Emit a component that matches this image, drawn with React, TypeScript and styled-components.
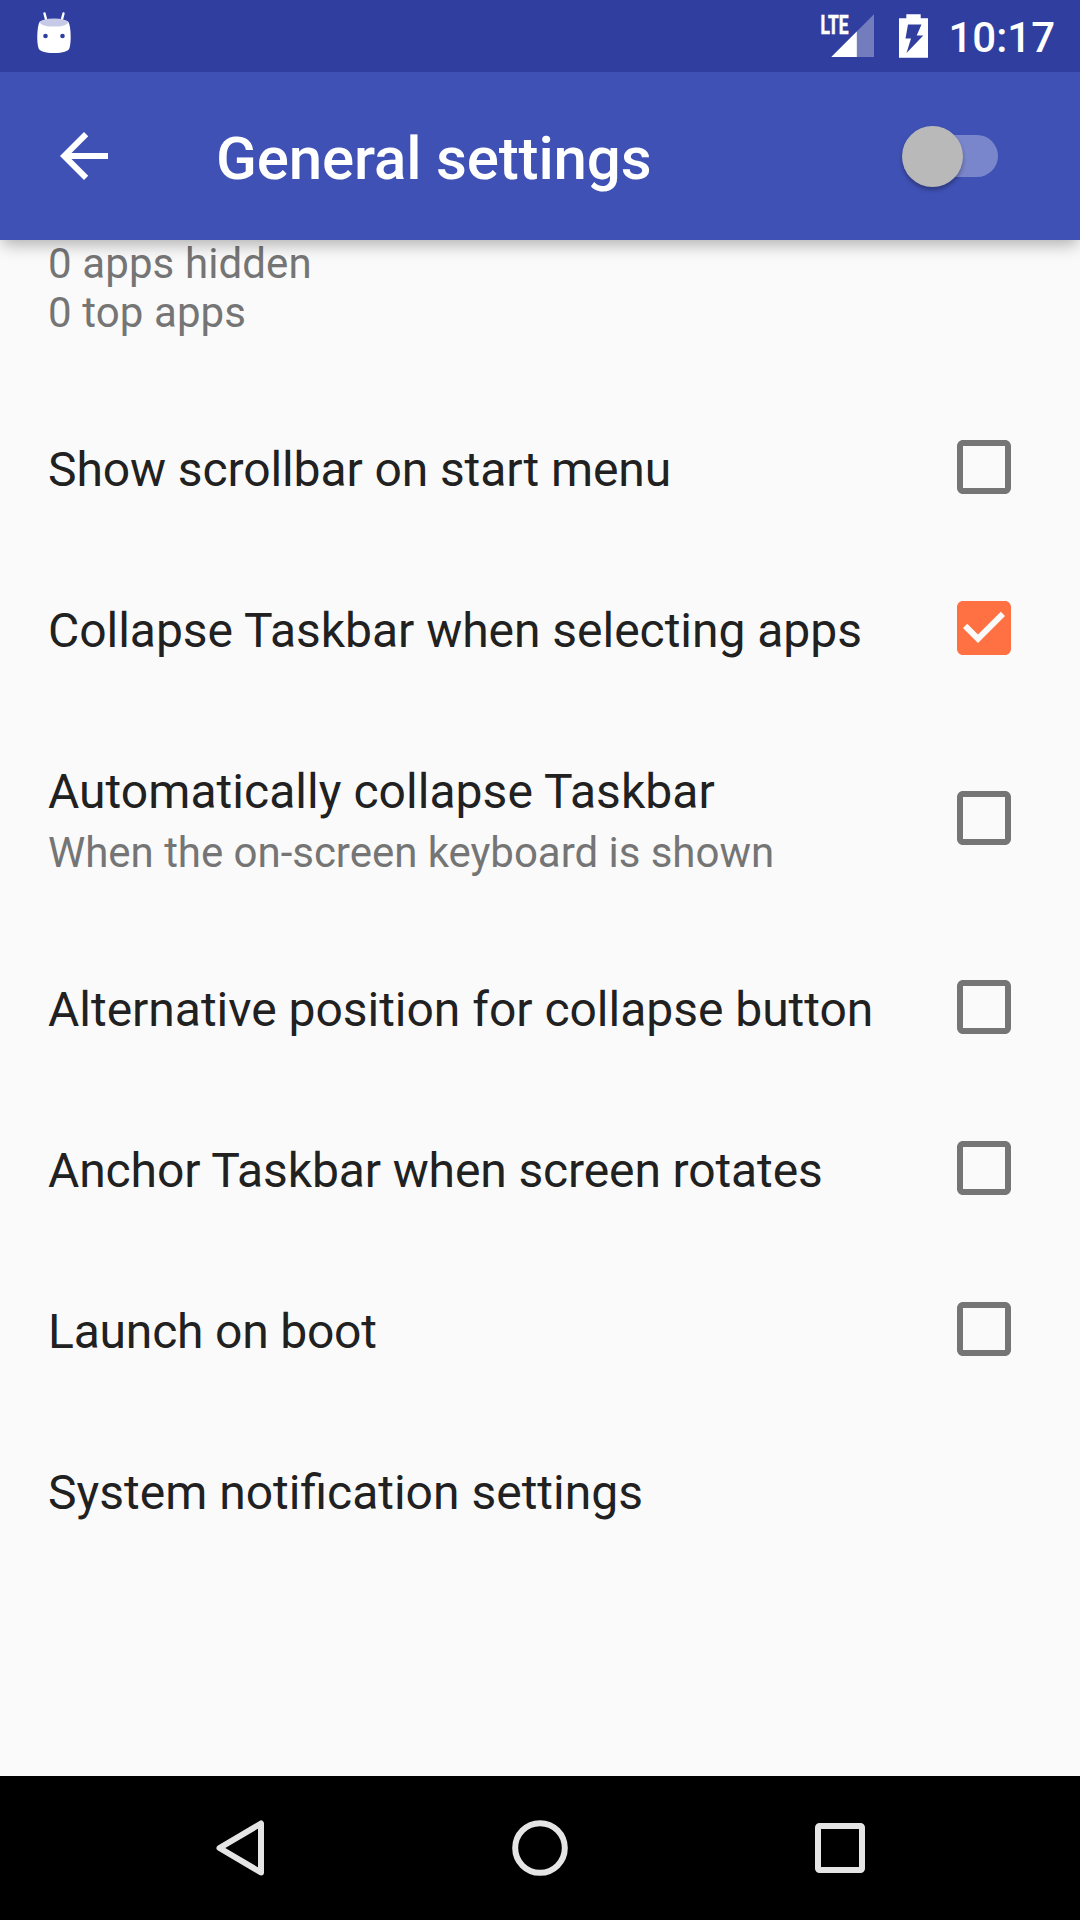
import React from 'react';
import styled, { createGlobalStyle } from 'styled-components';

const Global = createGlobalStyle`
  * { box-sizing: border-box; }
  body { margin: 0; }
  svg { display: block; flex: none; }
`;

const Screen = styled.div`
  display: flex;
  flex-direction: column;
  width: 1080px;
  height: 1920px;
  overflow: hidden;
  background: #fafafa;
  font-family: Roboto, sans-serif;
`;

const StatusBar = styled.header`
  display: flex;
  flex: none;
  justify-content: space-between;
  height: 72px;
  padding: 0 25px 0 36px;
  background: #303f9f;
  color: #fff;
  z-index: 2;
`;

const StatusIcons = styled.div`
  display: flex;
`;

const NetworkLabel = styled.text`
  font-size: 26px;
  font-weight: 700;
  fill: #fff;
  stroke: #fff;
  stroke-width: 0.6px;
`;

const Clock = styled.span`
  padding-top: 13px;
  margin-left: 17px;
  font-size: 42px;
  font-weight: 500;
  line-height: 49px;
`;

const Toolbar = styled.div`
  display: flex;
  flex: none;
  align-items: center;
  height: 168px;
  padding: 0 82px 0 48px;
  background: #3f51b5;
  color: #fff;
  z-index: 1;
  box-shadow: 0 6px 16px -2px rgba(0, 0, 0, 0.32);
`;

const Title = styled.h1`
  flex: 1;
  margin: 5px 0 0 96px;
  font-size: 60px;
  font-weight: 500;
  line-height: 72px;
  letter-spacing: -0.15px;
`;

const Switch = styled.div`
  display: flex;
  align-items: center;
  width: 96px;
  height: 60px;
  position: relative;
`;

const Track = styled.div`
  flex: 1;
  height: 42px;
  margin-left: 9px;
  border-radius: 21px;
  background: #7a86cb;
`;

const Thumb = styled.div`
  position: absolute;
  left: 0;
  top: -0.5px;
  width: 61px;
  height: 61px;
  border-radius: 50%;
  background: #b9b9b9;
  box-shadow: 0 3px 4px rgba(0, 0, 0, 0.3);
`;

const List = styled.main`
  display: flex;
  flex: 1;
  flex-direction: column;
  overflow: hidden;
`;

const TopSummary = styled.div`
  flex: none;
  height: 148px;
  margin-top: -1px;
  padding: 0 48px;
  font-size: 42px;
  line-height: 49px;
  letter-spacing: 0.11px;
  color: #757575;
`;

const Row = styled.div<{ $tall?: boolean }>`
  display: flex;
  flex: none;
  align-items: center;
  height: ${p => (p.$tall ? 218 : 161)}px;
  padding: 0 69px 0 48px;
`;

const Labels = styled.div`
  flex: 1;
  padding-top: 4px;
  white-space: nowrap;
`;

const Name = styled.div<{ $tracking?: number }>`
  font-size: 48px;
  line-height: 57px;
  letter-spacing: ${p => (p.$tracking ? `${p.$tracking}px` : 'normal')};
  color: #212121;
`;

const Note = styled.div`
  margin-top: 8px;
  font-size: 42px;
  line-height: 49px;
  letter-spacing: -0.03px;
  color: #757575;
`;

const CheckIcon = styled.svg<{ $on: boolean }>`
  width: 54px;
  height: 54px;
  margin-bottom: 1px;
  fill: ${p => (p.$on ? '#ff7043' : '#757575')};
`;

const NavBar = styled.nav`
  display: flex;
  flex: none;
  height: 144px;
  padding: 0 90px;
  background: #000;
`;

const NavButton = styled.div`
  display: flex;
  flex: 1;
  align-items: center;
  justify-content: center;
`;

const NavIcon = styled.svg`
  width: 60px;
  height: 60px;
  fill: none;
  stroke: #e5e5e5;
  stroke-width: 6px;
  stroke-linejoin: round;
`;

type Setting = { name: string; tracking?: number; note?: string; checked?: boolean };

const settings: Setting[] = [
  { name: 'Show scrollbar on start menu', tracking: -0.1, checked: false },
  { name: 'Collapse Taskbar when selecting apps', tracking: -0.03, checked: true },
  { name: 'Automatically collapse Taskbar', tracking: 0.04, note: 'When the on-screen keyboard is shown', checked: false },
  { name: 'Alternative position for collapse button', tracking: -0.02, checked: false },
  { name: 'Anchor Taskbar when screen rotates', tracking: -0.12, checked: false },
  { name: 'Launch on boot', tracking: -0.2, checked: false },
  { name: 'System notification settings' },
];

function Checkbox({ checked }: { checked: boolean }) {
  return (
    <CheckIcon $on={checked} viewBox="3 3 18 18">
      <path
        d={
          checked
            ? 'M19 3H5c-1.11 0-2 .9-2 2v14c0 1.1.89 2 2 2h14c1.11 0 2-.9 2-2V5c0-1.1-.89-2-2-2zm-9 14l-5-5 1.41-1.41L10 14.17l7.59-7.59L19 8l-9 9z'
            : 'M19 5v14H5V5h14m0-2H5c-1.1 0-2 .9-2 2v14c0 1.1.9 2 2 2h14c1.1 0 2-.9 2-2V5c0-1.1-.9-2-2-2z'
        }
      />
    </CheckIcon>
  );
}

function Marshmallow() {
  return (
    <svg width="36" height="72" viewBox="36 0 36 72">
      <path d="M44.5 13.5l2 7.5M63.5 13.5l-2 7.5" stroke="#fff" strokeWidth="2.4" strokeLinecap="round" />
      <path d="M39.5 22C44 18 64 18 68.5 22C71 27 71.5 42 69.5 48C68.5 51.5 63 53 54 53S39.500 51.5 38.5 48C36.5 42 37 27 39.5 22Z" fill="#fff" />
      <ellipse cx="54" cy="22.6" rx="14" ry="4" fill="#c7cae6" />
      <circle cx="45.5" cy="36" r="2.3" fill="#303f9f" />
      <circle cx="62.5" cy="36" r="2.3" fill="#303f9f" />
    </svg>
  );
}

function Signal() {
  return (
    <svg width="56" height="72" viewBox="820 0 56 72">
      <path d="M874 14.3V57H831.300Z" fill="#737dbd" />
      <path d="M856.8 31.5V57H831.300Z" fill="#fff" />
      <NetworkLabel x="820.5" y="33.6" textLength="28" lengthAdjust="spacingAndGlyphs">LTE</NetworkLabel>
    </svg>
  );
}

function Battery() {
  return (
    <svg width="55" height="72" viewBox="876 0 55 72">
      <path
        fillRule="evenodd"
        fill="#fff"
        d="M906.3 14.2H920.7V18.2H928V57.7H899V18.2H906.3ZM908 24.5L905.5 38.5H911L906.5 53L923.3 35.5H916.7L921.5 24.5Z"
      />
    </svg>
  );
}

export default function App() {
  return (
    <Screen>
      <Global />
      <StatusBar>
        <Marshmallow />
        <StatusIcons>
          <Signal />
          <Battery />
          <Clock>10:17</Clock>
        </StatusIcons>
      </StatusBar>
      <Toolbar>
        <svg width="72" height="72" viewBox="0 0 24 24" fill="#fff">
          <path d="M20 11H7.83l5.590-5.590L12 4l-8 8 8 8 1.410-1.410L7.83 13H20v-2z" />
        </svg>
        <Title>General settings</Title>
        <Switch>
          <Track />
          <Thumb />
        </Switch>
      </Toolbar>
      <List>
        <TopSummary>
          0 apps hidden
          <br />0 top apps
        </TopSummary>
        {settings.map(s => (
          <Row key={s.name} $tall={!!s.note}>
            <Labels>
              <Name $tracking={s.tracking}>{s.name}</Name>
              {s.note && <Note>{s.note}</Note>}
            </Labels>
            {s.checked !== undefined && <Checkbox checked={s.checked} />}
          </Row>
        ))}
      </List>
      <NavBar>
        <NavButton>
          <NavIcon viewBox="0 0 60 60">
            <path d="M51 5.5V54.5L9.5 30Z" />
          </NavIcon>
        </NavButton>
        <NavButton>
          <NavIcon viewBox="0 0 60 60">
            <circle cx="30" cy="30" r="24.8" />
          </NavIcon>
        </NavButton>
        <NavButton>
          <NavIcon viewBox="0 0 60 60">
            <rect x="8" y="8" width="44" height="44" rx="1.5" />
          </NavIcon>
        </NavButton>
      </NavBar>
    </Screen>
  );
}
